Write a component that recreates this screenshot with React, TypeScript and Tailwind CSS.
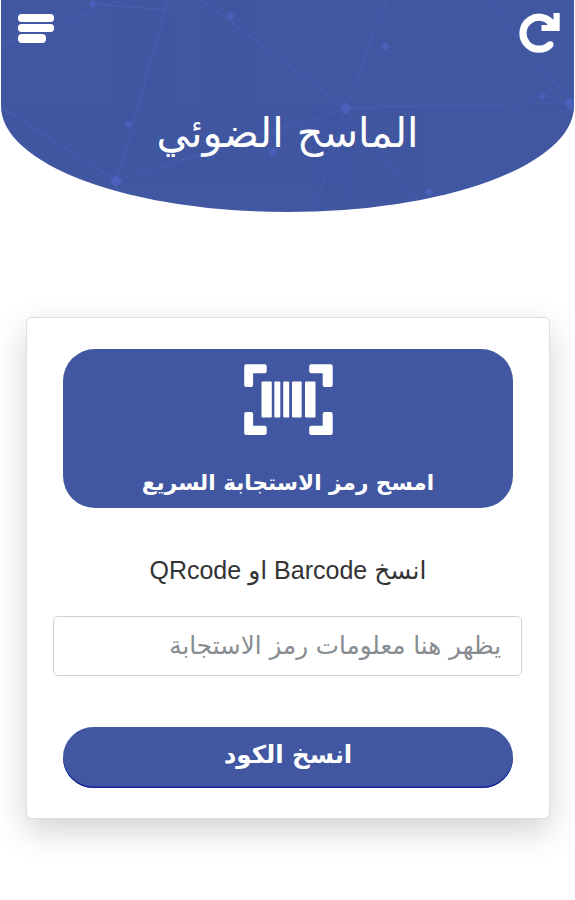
const points = [
  [92, 4, 3], [229.5, 16, 3], [127.5, 124.5, 3], [115, 181, 5], [344.5, 108.5, 5],
  [384, 46.5, 3], [541.5, 96, 2.5], [569, 103, 5], [428, 192.5, 3], [272, 152, 3],
];

const lines = [
  [0, 44, 28, 36], [54, 26, 92, 11], [92, 11, 122, 0], [92, 4, 168, 10],
  [167, 0, 116, 181], [200, 0, 345, 108], [385, 0, 345, 108], [345, 108, 570, 103],
  [487, 0, 570, 103], [115, 181, 345, 108], [0, 107, 116, 181], [345, 108, 313, 210],
  [345, 108, 415, 200], [385, 46, 570, 103], [287, 28, 385, 46],
];

function Network() {
  return (
    <svg className="absolute inset-0" width="575" height="212" viewBox="0 0 575 212" aria-hidden="true">
      {lines.map(([x1, y1, x2, y2], i) => (
        <line key={i} x1={x1} y1={y1} x2={x2} y2={y2} stroke="#5168bd" strokeWidth="1.8" opacity={i > 10 ? 0.18 : 0.3} />
      ))}
      {points.map(([x, y, r], i) => (
        <path key={i} d={`M${x} ${y - r}L${x + r} ${y}L${x} ${y + r}L${x - r} ${y}Z`} fill="#4d64c4" stroke="#4d64c4" strokeWidth="2" strokeLinejoin="round" opacity="0.75" />
      ))}
    </svg>
  );
}

function MenuIcon() {
  return (
    <div className="flex flex-col gap-[2px]">
      <span className="h-2 w-9 rounded-[3.5px] bg-white" />
      <span className="h-2 w-9 rounded-[3.5px] bg-white" />
      <span className="h-[9px] w-7 rounded-[4px] bg-white" />
    </div>
  );
}

function RefreshIcon() {
  return (
    <svg width="42" height="42" viewBox="0 0 42 42" fill="none" aria-hidden="true">
      <path d="M35 12.5A16 16 0 1 0 32 31.8" stroke="white" strokeWidth="7.2" />
      <circle cx="32.2" cy="31.6" r="3.3" fill="white" />
      <path d="M35.5 0H41.7V18H23.5V12H29L33 6L35.5 7Z" fill="white" />
    </svg>
  );
}

function BarcodeIcon() {
  return (
    <svg width="90" height="72" viewBox="0 0 90 72" aria-hidden="true">
      <g fill="white" stroke="white" strokeWidth="4" strokeLinejoin="round">
        <path d="M3.2 2.2H21.7V7.3H8.1V21H3.2Z" />
        <path d="M68.2 2.2H87.7V21H81.7V7.3H68.2Z" />
        <path d="M3.2 50H8.1V63.7H21.7V69H3.2Z" />
        <path d="M81.7 50H87.7V69H68.2V63.7H81.7Z" />
      </g>
      <g fill="white">
        <rect x="18.5" y="17.5" width="10.3" height="36" rx="1" />
        <rect x="31.3" y="17.5" width="6" height="36" rx="1" />
        <rect x="40.2" y="17.5" width="6" height="36" rx="1" />
        <rect x="49" y="17.5" width="9.7" height="36" rx="1" />
        <rect x="62" y="17.5" width="10.5" height="36" rx="1" />
      </g>
    </svg>
  );
}

export default function App() {
  return (
    <div className="h-[900px] w-[575px] overflow-hidden bg-white font-['DejaVu_Sans',sans-serif]">
      <header className="relative mx-px h-[212px] overflow-hidden rounded-b-[50%] bg-[#4157a1]">
        <Network />
        <div className="relative flex h-[60px] justify-between pt-[14px] pr-[14px] pl-[17px]">
          <button aria-label="القائمة" className="h-7"><MenuIcon /></button>
          <button aria-label="تحديث" className="-mt-px h-[42px]"><RefreshIcon /></button>
        </div>
        <h1 dir="rtl" className="relative mt-[43px] flex justify-center text-[41.3px] leading-[60px] whitespace-nowrap text-white">
          <span>الماسح الضوئي</span>
        </h1>
      </header>

      <main className="mx-[26px] mt-[105px] h-[502px] w-[524px] rounded-md border-[1.5px] border-[#dcdedf] bg-white px-[26px] pt-[31px] shadow-[0_12px_32px_rgba(0,0,0,0.18)]">
        <button className="mx-[10px] flex h-[159px] w-[450px] flex-col items-center rounded-[32px] bg-[#4157a1] pt-[15px] text-white">
          <BarcodeIcon />
          <span dir="rtl" className="mt-[27px] text-[21.6px] leading-[40px] font-bold whitespace-nowrap">امسح رمز الاستجابة السريع</span>
        </button>
        <p dir="rtl" className="mt-[43px] flex h-10 items-center justify-center font-['Liberation_Sans','DejaVu_Sans',sans-serif] text-[25px] whitespace-nowrap text-[#333]">
          <span>انسخ Barcode او QRcode</span>
        </p>
        <div dir="rtl" className="mt-[25px] flex h-[60px] w-[469px] items-center rounded-[5px] border-[1.5px] border-[#cfd2d5] px-5 text-[24.6px] whitespace-nowrap text-[#878c91]">
          <span>يظهر هنا معلومات رمز الاستجابة</span>
        </div>
        <button dir="rtl" className="mx-[10px] mt-[51px] flex h-[61px] w-[450px] items-center justify-center rounded-full bg-[#4157a1] pb-[5px] text-[24.5px] font-bold whitespace-nowrap text-white shadow-[inset_0_-1.5px_0_#142396]">
          <span>انسخ الكود</span>
        </button>
      </main>
    </div>
  );
}
